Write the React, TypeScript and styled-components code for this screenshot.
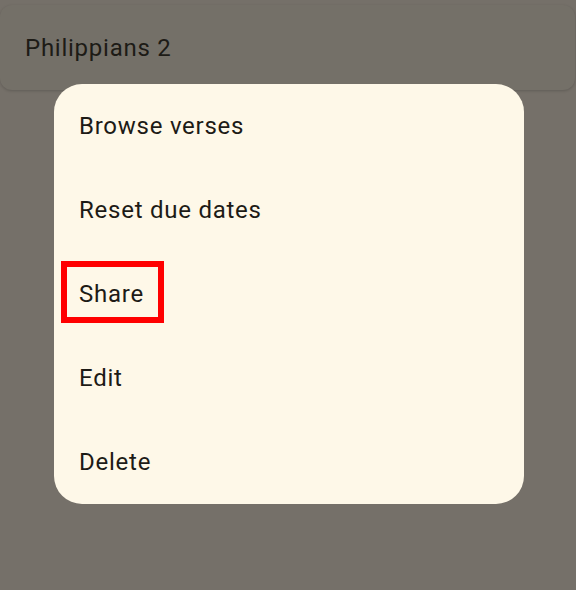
import React from "react";
import styled, { createGlobalStyle } from "styled-components";

const Global = createGlobalStyle`
  html, body { margin: 0; padding: 0; }
  body {
    background: #757069;
    font-family: Roboto, "Noto Sans", sans-serif;
    width: 576px;
    height: 590px;
    overflow: hidden;
  }
`;

const Page = styled.div`
  position: relative;
  width: 576px;
  height: 590px;
  padding-top: 5px;
  box-sizing: border-box;
`;

const Card = styled.div`
  margin: 0 1px 0 0;
  height: 85px;
  border-radius: 12px;
  background: #747068;
  box-shadow: 0 1px 3px rgba(0, 0, 0, 0.18);
  display: flex;
  align-items: center;
  padding-left: 25px;
  box-sizing: border-box;
  font-size: 24px;
  color: #1d1b16;
  letter-spacing: 0.75px;
`;

const Menu = styled.ul`
  position: absolute;
  left: 54px;
  top: 84px;
  width: 470px;
  margin: 0;
  padding: 0;
  list-style: none;
  background: #fef8e8;
  border-radius: 28px;
  overflow: hidden;
`;

const Item = styled.li`
  height: 84px;
  display: flex;
  align-items: center;
  padding-left: 25px;
  font-size: 24px;
  color: #1d1b16;
  letter-spacing: 0.75px;
`;

const Highlight = styled.span`
  position: relative;
  &::before {
    content: "";
    position: absolute;
    left: -18px;
    top: -19px;
    width: 103px;
    height: 62px;
    box-sizing: border-box;
    border: 6px solid #ff0000;
  }
`;

const items = ["Browse verses", "Reset due dates", "Share", "Edit", "Delete"];

export default function App() {
  return (
    <Page>
      <Global />
      <Card>Philippians 2</Card>
      <Menu>
        {items.map((t) => (
          <Item key={t}>{t === "Share" ? <Highlight>{t}</Highlight> : t}</Item>
        ))}
      </Menu>
    </Page>
  );
}
